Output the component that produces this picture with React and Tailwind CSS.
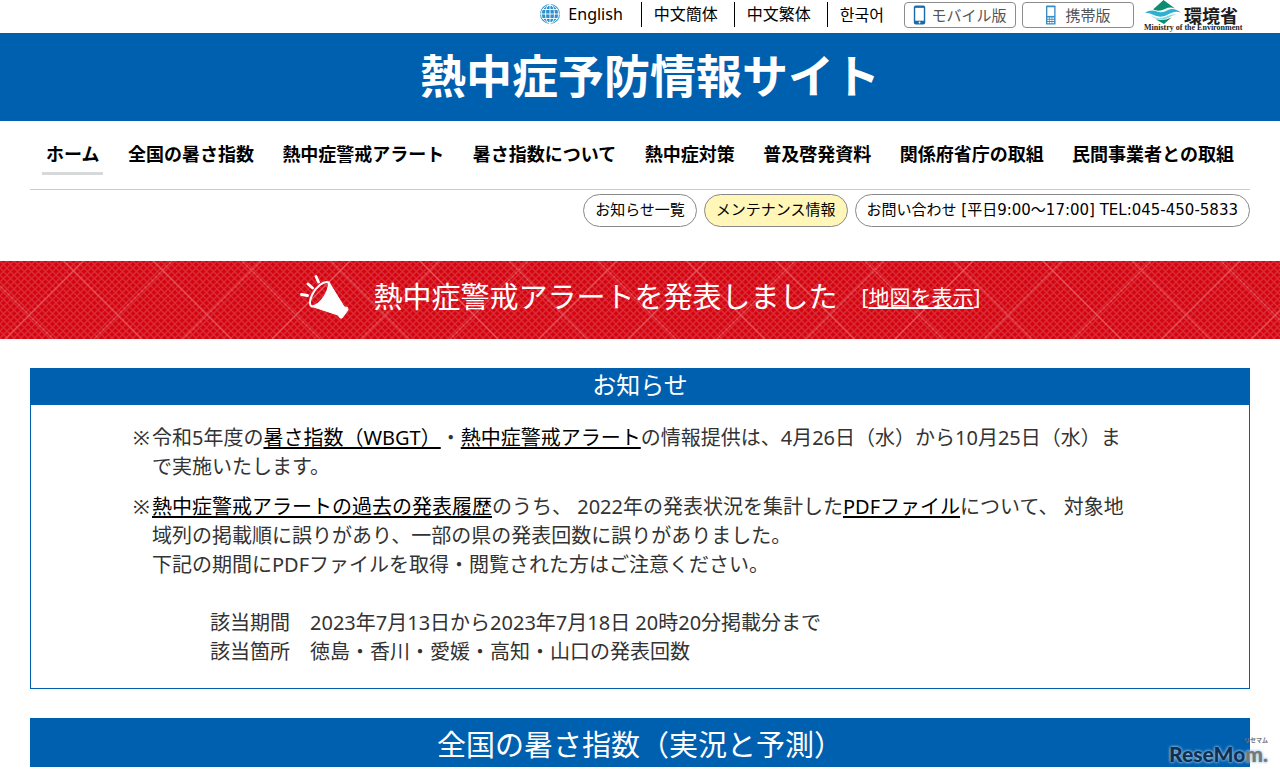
function Globe() {
  return (
    <svg viewBox="0 0 20 20" className="size-5" fill="none" stroke="#fff" strokeWidth="0.9">
      <circle cx="10" cy="10" r="10" fill="#2e8fcb" stroke="none" />
      <ellipse cx="10" cy="10" rx="4.5" ry="9.5" />
      <circle cx="10" cy="10" r="8.7" />
      <path d="M10 0v20M0 10h20M2 5.5h16M2 14.5h16" />
    </svg>
  );
}

function Smartphone() {
  return (
    <svg viewBox="0 0 14 21" className="h-5 w-3.5">
      <rect x="0.5" y="0.5" width="12" height="20" rx="2" fill="#1c6ba8" />
      <rect x="2" y="3" width="9" height="13.5" fill="#fff" />
      <circle cx="6.5" cy="18.3" r="1" fill="#fff" />
    </svg>
  );
}

function FeaturePhone() {
  return (
    <svg viewBox="0 0 12 22" className="h-5 w-3">
      <rect x="0.5" y="0.5" width="10.5" height="21" rx="1" fill="#3b8cc4" />
      <rect x="2" y="2.5" width="7.5" height="9.5" fill="#fff" />
      <path d="M2 14.5h7.5M2 17h7.5M2 19.5h7.5" stroke="#fff" strokeWidth="1.4" strokeDasharray="2 0.7" />
    </svg>
  );
}

function MinistryLogo() {
  return (
    <a href="#env" aria-label="環境省" className="flex w-24 flex-col text-[#1d1d1d]">
      <span className="flex h-6 items-start">
        <svg viewBox="0 0 38 24" className="h-6 w-[38px] shrink-0">
          <path d="M19.500 0 L31 8.500 Q26 6.500 21 9 Q15 12 9 9.500Z" fill="#0b8f72" />
          <path d="M1 12.500 Q7 9 13 11.500 Q18 13.500 24 10 Q30 7 37 12.500 Q31 10.500 26 13.500 Q18 18.500 11 15.500 Q6 13 1 12.500Z" fill="#2fb0cf" />
          <path d="M6 15 Q13 20 21 17 Q27 14 33 14 Q27 16 23 18.500 Q13 21.500 6 15Z" fill="#8fd8e6" />
          <path d="M11.500 19.300 Q19 21.500 27.500 17.500 L20 24Z" fill="#0b8f72" />
        </svg>
        <span className="ml-0.5 text-[18px] leading-8 font-bold whitespace-nowrap">環境省</span>
      </span>
      <span className="font-['Liberation_Serif',serif] text-[8px] leading-2 font-bold whitespace-nowrap">Ministry of the Environment</span>
    </a>
  );
}

function Megaphone() {
  return (
    <svg viewBox="0 0 50 46" className="h-[46px] w-[50px]" fill="none" stroke="#fff" strokeWidth="2.8" strokeLinecap="round">
      <path d="M16 2.500l2.500 5.500M8 10l4.500 4M1.500 20.500l6 1" />
      <path d="M29 8.500C24 6 16 13 12 21C9 28 9.500 31.500 12 32.500C19 32 29 20 29 8.500Z" strokeWidth="2" />
      <path d="M29 8.500C30 20 21 31 12 32.500L38 41L40 44L42 44L48 36L47.500 33.500L44.500 33Z" fill="#fff" strokeWidth="1" strokeLinejoin="round" />
    </svg>
  );
}

function AlertPattern() {
  return (
    <svg className="absolute inset-0 h-full w-full" aria-hidden="true">
      <defs>
        <pattern id="mesh" width="7" height="7" patternUnits="userSpaceOnUse">
          <path d="M-1 -1L8 8M-1 8L8 -1" stroke="#fff" strokeOpacity="0.16" strokeWidth="1.3" />
        </pattern>
        <pattern id="lattice" x="29" y="54" width="89" height="89" patternUnits="userSpaceOnUse">
          <path d="M-1 -1L90 90M-1 90L90 -1" stroke="#fff" strokeOpacity="0.22" strokeWidth="1.3" />
        </pattern>
      </defs>
      <rect width="100%" height="100%" fill="url(#mesh)" />
      <rect width="100%" height="100%" fill="url(#lattice)" />
    </svg>
  );
}

const NAV = ["ホーム", "全国の暑さ指数", "熱中症警戒アラート", "暑さ指数について", "熱中症対策", "普及啓発資料", "関係府省庁の取組", "民間事業者との取組"];

function TextLink({ children }) {
  return <a href="#info" className="text-black underline decoration-2 underline-offset-2">{children}</a>;
}

function Mark() {
  return <span className="inline-block w-[19px] indent-0">※</span>;
}

function LineBreak() {
  return <br className="hidden lg:inline" />;
}

export default function App() {
  return (
    <div lang="ja" className="relative overflow-hidden bg-white font-['Noto_Sans','Noto_Sans_CJK_JP',sans-serif] text-black [text-spacing-trim:space-all]">
      <div className="flex h-[33px] items-start justify-end pr-10">
        <ul className="mt-0.5 flex text-[16px] leading-6 whitespace-nowrap">
          <li className="pr-[18px]">
            <a href="#en" className="flex items-center gap-2"><Globe />English</a>
          </li>
          <li className="border-l border-black pr-4 pl-3"><a href="#zh-cn">中文簡体</a></li>
          <li className="border-l border-black pr-4 pl-3"><a href="#zh-tw">中文繁体</a></li>
          <li className="border-l border-black pr-4 pl-3"><a href="#ko" lang="ko" className="font-['Noto_Sans_CJK_KR',sans-serif]">한국어</a></li>
        </ul>
        <div className="mt-0.5 ml-1 flex gap-1.5 whitespace-nowrap">
          <a href="#mobile" className="flex h-[26px] w-28 items-center justify-center gap-1 rounded border border-[#8c8c8c] text-[15px] text-[#555]"><Smartphone />モバイル版</a>
          <a href="#feature" className="flex h-[26px] w-28 items-center justify-center gap-2 rounded border border-[#8c8c8c] text-[15px] text-[#555]"><FeaturePhone />携帯版</a>
        </div>
        <div className="ml-2.5"><MinistryLogo /></div>
      </div>

      <header className="flex h-[88px] items-center justify-center bg-[#0060b0] pb-1 pl-5">
        <h1 className="text-[46px] leading-none font-bold whitespace-nowrap text-white">熱中症予防情報サイト</h1>
      </header>

      <div className="mx-[30px]">
        <nav className="flex justify-between border-b border-[#ccc] px-3 pt-[19px] pb-3.5 text-[18px] leading-7 font-bold whitespace-nowrap">
          {NAV.map((label, i) => (
            <a key={label} href={`#nav${i}`} className={i === 0 ? "border-b-3 border-[#d5d9d9] px-1 pb-1" : "border-b-3 border-transparent px-1 pb-1"}>{label}</a>
          ))}
        </nav>
        <div className="mt-1 flex justify-end gap-[7px] font-['DejaVu_Sans','Noto_Sans_CJK_JP',sans-serif] text-[15px] leading-[31px] whitespace-nowrap">
          <a href="#list" className="rounded-full border border-[#888] px-[11px]">お知らせ一覧</a>
          <a href="#maintenance" className="rounded-full border border-[#888] bg-[#fff6b8] px-[11px]">メンテナンス情報</a>
          <a href="#contact" className="rounded-full border border-[#888] px-[11px]">お問い合わせ [平日9:00～17:00] TEL:045-450-5833</a>
        </div>
      </div>

      <section className="relative mt-[34px] flex h-[78px] items-center justify-center bg-[#d40511] pb-1.5 text-white">
        <AlertPattern />
        <div className="relative flex items-center whitespace-nowrap">
          <Megaphone />
          <p className="ml-6 text-[29px] leading-10">熱中症警戒アラートを発表しました</p>
          <p className="ml-6 text-[21px] leading-10">[<a href="#map" className="underline underline-offset-2">地図を表示</a>]</p>
        </div>
      </section>

      <main className="mx-[30px] mt-[29px]">
        <section className="border border-[#0060b0]">
          <h2 className="bg-[#0060b0] pb-1 text-center text-[24px] leading-8 text-white">お知らせ</h2>
          <div className="px-[102px] pt-[18px] pb-[22px] text-[20px] leading-[29px] text-[#333]">
            <p className="pl-[19px] -indent-[19px]"><Mark />令和5年度の<TextLink>暑さ指数（WBGT）</TextLink>・<TextLink>熱中症警戒アラート</TextLink>の情報提供は、4月26日（水）から10月25日（水）ま<LineBreak />で実施いたします。</p>
            <div className="mt-[11px] pl-[19px]">
              <p className="-indent-[19px]"><Mark /><TextLink>熱中症警戒アラートの過去の発表履歴</TextLink>のうち、 2022年の発表状況を集計した<TextLink>PDFファイル</TextLink>について、 対象地<LineBreak />域列の掲載順に誤りがあり、一部の県の発表回数に誤りがありました。</p>
              <p>下記の期間にPDFファイルを取得・閲覧された方はご注意ください。</p>
              <div className="mt-[29px] pl-[58px]">
                <p>該当期間　2023年7月13日から2023年7月18日 20時20分掲載分まで</p>
                <p>該当箇所　徳島・香川・愛媛・高知・山口の発表回数</p>
              </div>
            </div>
          </div>
        </section>
        <h2 className="mt-[29px] mb-[5px] bg-[#0060b0] pt-1 text-center text-[29px] leading-[45px] text-white">全国の暑さ指数（実況と予測）</h2>
      </main>

      <div className="absolute right-3 bottom-2 flex flex-col items-end">
        <span className="text-[6px] leading-2 font-bold text-[#777]">リセマム</span>
        <span className="font-['Lato',sans-serif] text-[21px] leading-5 font-black text-[#0d3156] [text-shadow:0_0_3px_#9fc3e0,0_0_3px_#9fc3e0]">ReseMo<span className="text-[#777]">m.</span></span>
      </div>
    </div>
  );
}
